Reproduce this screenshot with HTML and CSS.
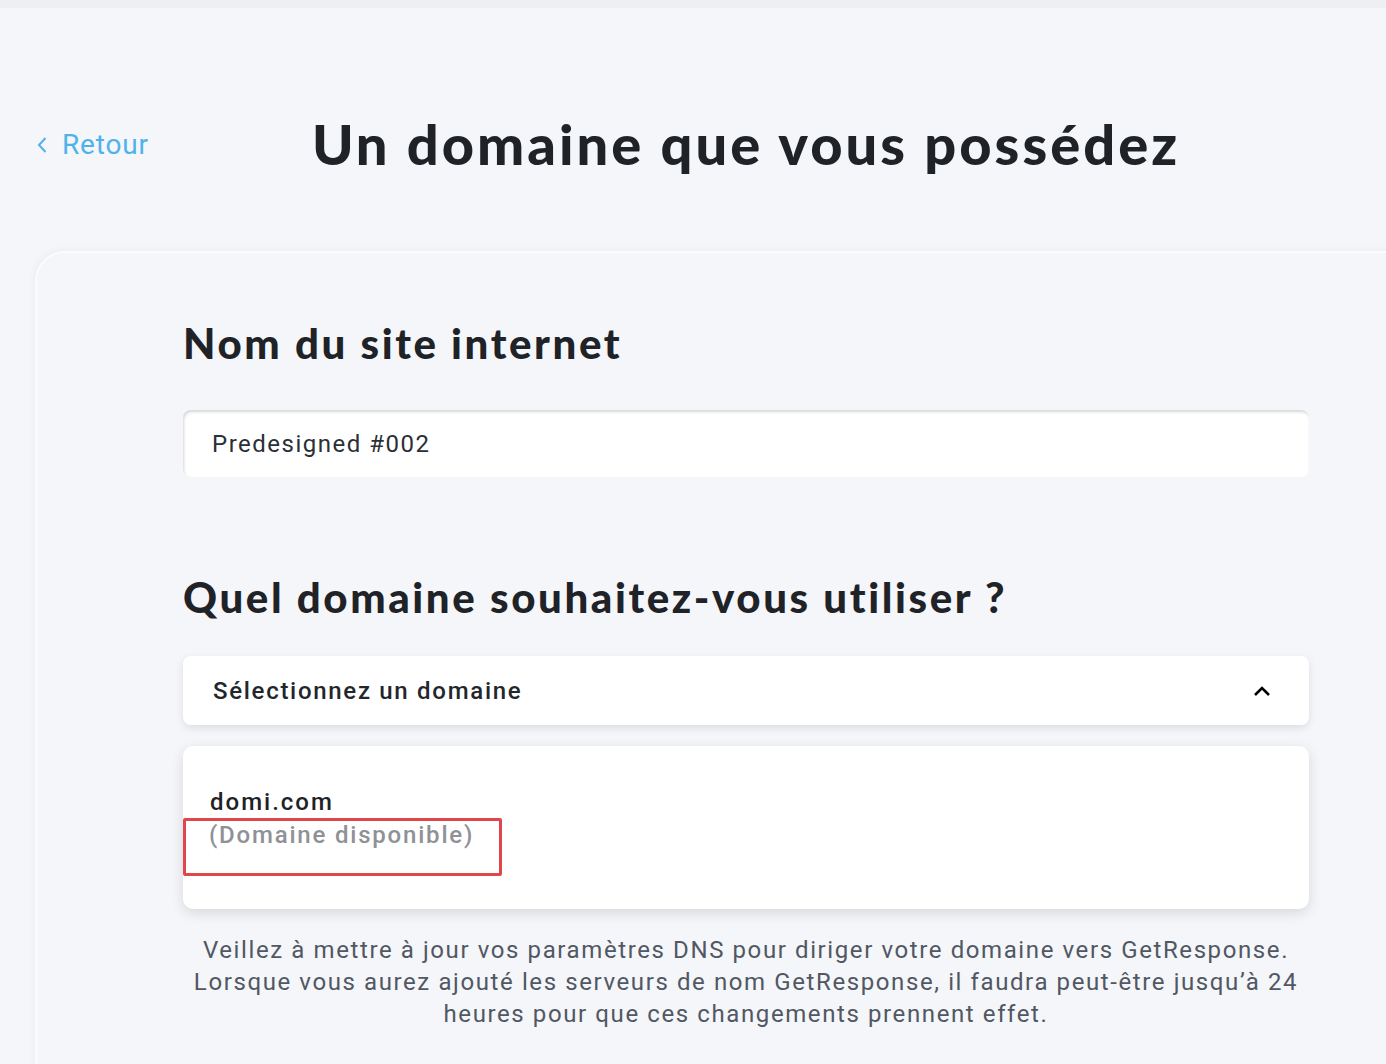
FILE: index.html
```html
<!DOCTYPE html>
<html>
<head>
	<meta charset="UTF-8">
	<title>Un domaine que vous possédez</title>
	<link rel="stylesheet" href="styles.css">
</head>
<body>
	<div class="topbar"></div>

	<div class="header">
		<a class="back-link" href="#">
			<svg width="11" height="18" viewBox="0 0 11 18"><path d="M8.5 2 L2 9 L8.5 16" fill="none" stroke="currentColor" stroke-width="2"/></svg>
			<span>Retour</span>
		</a>
		<h1>Un domaine que vous possédez</h1>
	</div>

	<div class="card">
		<div class="card-content">
			<h2>Nom du site internet</h2>
			<div class="text-input">Predesigned #002</div>

			<h2 class="domain-title">Quel domaine souhaitez-vous utiliser ?</h2>
			<div class="select-box">
				<span>Sélectionnez un domaine</span>
				<svg width="18" height="12" viewBox="0 0 18 12"><path d="M2 10 L9 3 L16 10" fill="none" stroke="#000" stroke-width="2.6"/></svg>
			</div>

			<div class="options">
				<div class="option">
					<div class="option-name">domi.com</div>
					<div class="option-status">(Domaine disponible)</div>
				</div>
			</div>

			<p class="dns-note">Veillez à mettre à jour vos paramètres DNS pour diriger votre domaine vers GetResponse. Lorsque vous aurez ajouté les serveurs de nom GetResponse, il faudra peut-être jusqu’à 24 heures pour que ces changements prennent effet.</p>
		</div>
	</div>
</body>
</html>
```

FILE: styles.css
```css
html, body {
	margin: 0;
	padding: 0;
	background-color: #f5f6fa;
	overflow: hidden;
	font-family: Roboto, "Liberation Sans", sans-serif;
	color: #2b2f36;
}

.topbar {
	height: 8px;
	background-color: #efeff3;
}

.header {
	display: grid;
	grid-template-columns: 148px 1126px 148px;
	align-items: center;
	width: 1422px;
	margin-left: 35px;
	padding-top: 98px;
}

.back-link {
	display: flex;
	align-items: center;
	gap: 14px;
	margin-left: 2px;
	color: #4fb3ea;
	text-decoration: none;
	font-size: 28px;
	letter-spacing: 0.8px;
}

.back-link svg {
	margin-top: 2px;
}

h1 {
	margin: 0;
	text-align: center;
	font-family: Lato, sans-serif;
	font-weight: 900;
	font-size: 56px;
	line-height: 76px;
	letter-spacing: 3px;
	color: #1f2328;
}

.card {
	width: 1422px;
	margin-left: 35px;
	margin-top: 69px;
	background-color: #f4f6f9;
	border: 2px solid #fbfbfd;
	border-right: none;
	border-bottom: none;
	border-radius: 30px 0 0 0;
	box-shadow: -2px -2px 6px rgba(0, 0, 0, 0.03);
	min-height: 900px;
}

.card-content {
	width: 1126px;
	margin-left: 146px;
	padding-top: 60px;
}

h2 {
	margin: 0;
	font-family: Lato, sans-serif;
	font-weight: 900;
	font-size: 42px;
	line-height: 60px;
	letter-spacing: 2.6px;
	color: #1f2328;
}

.text-input {
	margin-top: 37px;
	height: 67px;
	box-sizing: border-box;
	padding: 0 29px;
	display: flex;
	align-items: center;
	background-color: #ffffff;
	border-radius: 8px;
	box-shadow: inset 1px 2px 3px rgba(0, 0, 0, 0.16);
	font-size: 24px;
	letter-spacing: 1.5px;
	color: #2b2f36;
}

.domain-title {
	margin-top: 90px;
}

.select-box {
	margin-top: 29px;
	height: 69px;
	box-sizing: border-box;
	padding: 0 38px 0 30px;
	display: flex;
	align-items: center;
	justify-content: space-between;
	background-color: #ffffff;
	border-radius: 8px;
	box-shadow: 0 3px 8px rgba(0, 0, 0, 0.1);
	font-size: 24px;
	font-weight: 500;
	letter-spacing: 1.7px;
	color: #23272d;
}

.options {
	margin-top: 21px;
	height: 163px;
	box-sizing: border-box;
	padding: 40px 27px;
	background-color: #ffffff;
	border-radius: 10px;
	box-shadow: 0 4px 14px rgba(0, 0, 0, 0.12);
}

.option-name {
	font-size: 24px;
	font-weight: 500;
	letter-spacing: 2px;
	line-height: 32px;
	color: #1f2226;
}

.option-status {
	display: inline-block;
	margin-left: -27px;
	padding: 0 25px 24px 23px;
	border: 3.5px solid #e0474c;
	border-radius: 2px;
	font-size: 24px;
	font-weight: 500;
	letter-spacing: 1.8px;
	line-height: 28px;
	color: #8f9196;
}

.dns-note {
	margin: 25px 0 0;
	text-align: center;
	font-size: 24px;
	line-height: 32px;
	letter-spacing: 1.6px;
	color: #515763;
}
```
